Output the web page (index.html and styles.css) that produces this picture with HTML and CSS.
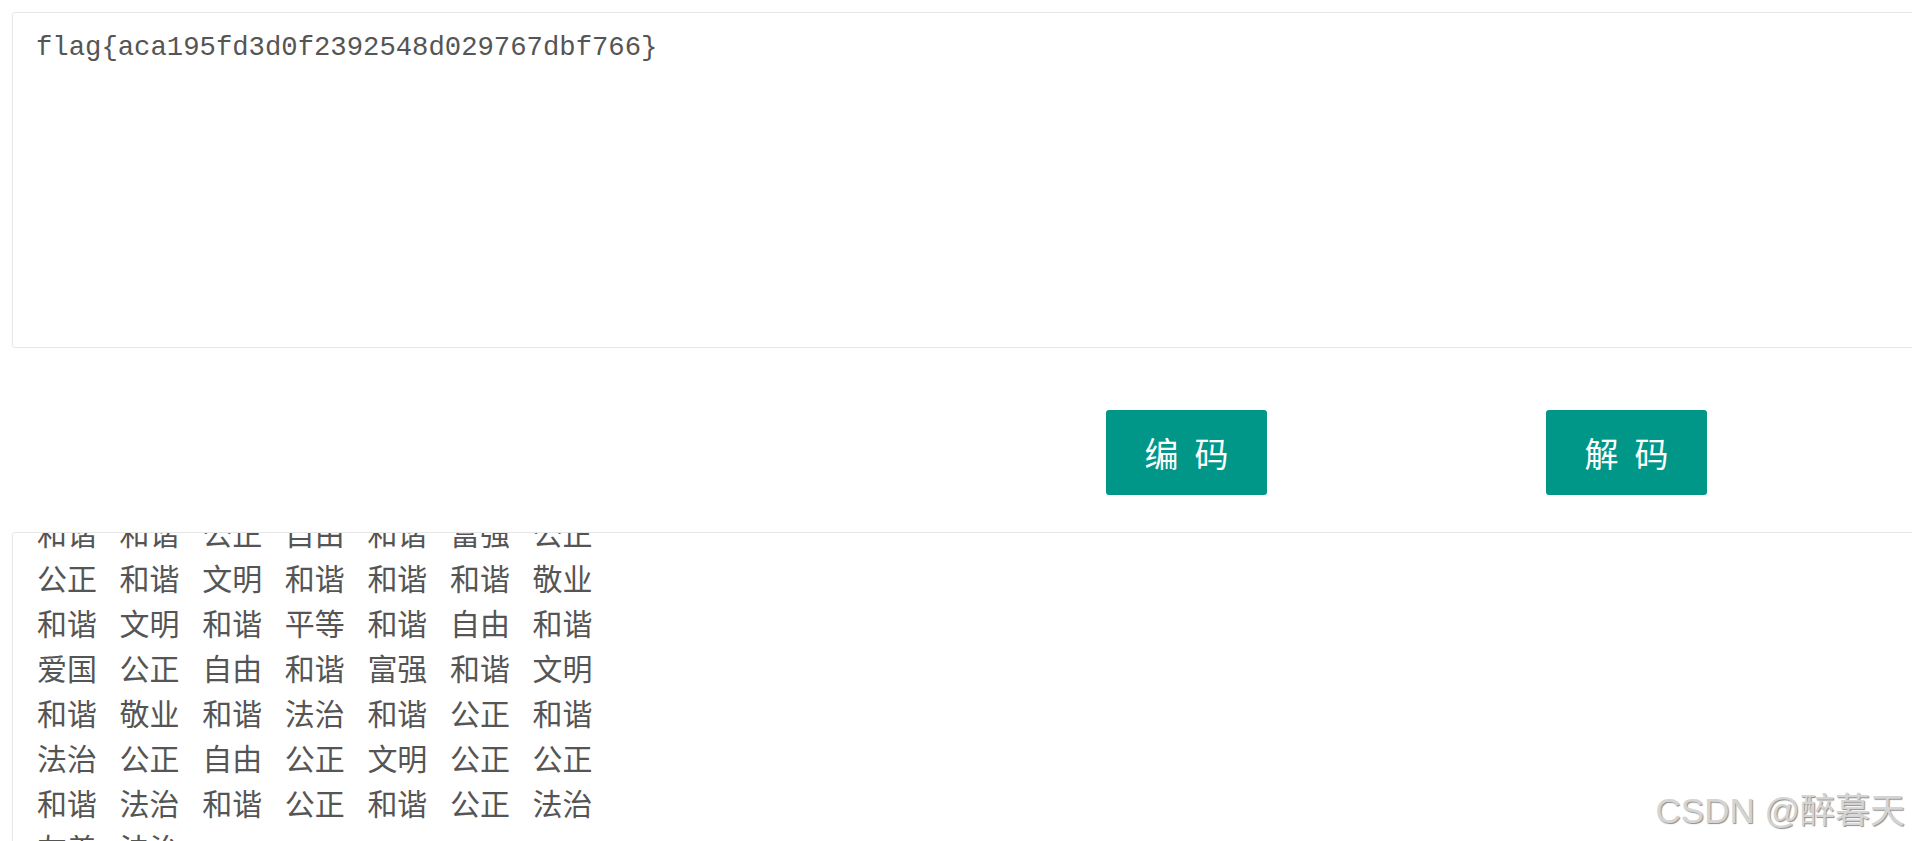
FILE: index.html
```html
<!DOCTYPE html>
<html lang="zh-CN">
<head>
<meta charset="utf-8">
<title>核心价值观编码</title>
<link rel="stylesheet" href="styles.css">
</head>
<body>
<div class="page">
  <div class="input-box">flag{aca195fd3d0f2392548d029767dbf766}</div>
  <div class="actions">
    <button class="btn"><span>编</span><span>码</span></button>
    <button class="btn"><span>解</span><span>码</span></button>
  </div>
  <div class="output-box">
    <div class="output-lines">
      <div class="line"><span>和谐</span><span>和谐</span><span>公正</span><span>自由</span><span>和谐</span><span>富强</span><span>公正</span></div>
      <div class="line"><span>公正</span><span>和谐</span><span>文明</span><span>和谐</span><span>和谐</span><span>和谐</span><span>敬业</span></div>
      <div class="line"><span>和谐</span><span>文明</span><span>和谐</span><span>平等</span><span>和谐</span><span>自由</span><span>和谐</span></div>
      <div class="line"><span>爱国</span><span>公正</span><span>自由</span><span>和谐</span><span>富强</span><span>和谐</span><span>文明</span></div>
      <div class="line"><span>和谐</span><span>敬业</span><span>和谐</span><span>法治</span><span>和谐</span><span>公正</span><span>和谐</span></div>
      <div class="line"><span>法治</span><span>公正</span><span>自由</span><span>公正</span><span>文明</span><span>公正</span><span>公正</span></div>
      <div class="line"><span>和谐</span><span>法治</span><span>和谐</span><span>公正</span><span>和谐</span><span>公正</span><span>法治</span></div>
      <div class="line"><span>友善</span><span>法治</span></div>
    </div>
  </div>
</div>
<div class="watermark">CSDN @醉暮天</div>
</body>
</html>
```
FILE: styles.css
```css
html, body {
  margin: 0;
  height: 100%;
  overflow: hidden;
  background: #fff;
}

.page {
  width: 1990px;
  padding: 12px 0 0 12px;
}

.input-box {
  box-sizing: border-box;
  width: 1960px;
  height: 336px;
  border: 1px solid #e6e6e6;
  border-radius: 3px;
  padding: 17px 23px;
  font-family: "Liberation Mono", monospace;
  font-size: 27.25px;
  line-height: 36px;
  color: #555;
}

.actions {
  display: flex;
  gap: 279px;
  margin: 62px 0 0 1094px;
}

.btn {
  width: 161px;
  height: 85px;
  padding: 0;
  border: 0;
  border-radius: 3px;
  background: #009688;
  color: #fff;
  font-family: "Noto Sans CJK SC", sans-serif;
  font-size: 34px;
  line-height: 1;
  display: flex;
  align-items: center;
  justify-content: center;
  gap: 16px;
}

.output-box {
  box-sizing: border-box;
  width: 1960px;
  height: 420px;
  margin-top: 37px;
  border: 1px solid #e6e6e6;
  border-radius: 3px;
  padding: 0 24px;
  overflow: hidden;
}

.output-lines {
  margin-top: -23px;
  font-family: "Noto Sans CJK SC", sans-serif;
  font-size: 30px;
  line-height: 45px;
  color: #555;
}

.line {
  display: flex;
  gap: 22.6px;
}

.watermark {
  position: absolute;
  top: 793px;
  right: 7px;
  font-family: "Liberation Sans", "Noto Sans CJK SC", sans-serif;
  font-size: 35px;
  line-height: 35px;
  color: #d4d4d4;
  text-shadow: 1px 1px 1px rgba(0, 0, 0, 0.45);
}
```
